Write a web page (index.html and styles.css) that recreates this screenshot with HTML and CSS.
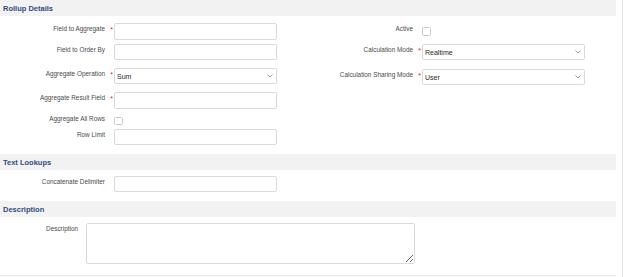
FILE: index.html
```html
<!DOCTYPE html>
<html>
<head>
<meta charset="utf-8">
<link rel="stylesheet" href="styles.css">
</head>
<body>
<div class="page">
  <div class="form">
    <section class="section">
      <h2 class="section-title">Rollup Details</h2>
      <div class="section-body cols">
        <div class="col">
          <div class="row r1">
            <div class="label">Field to Aggregate</div><div class="req">*</div>
            <div class="input h17"></div>
          </div>
          <div class="row r2">
            <div class="label">Field to Order By</div><div class="req"></div>
            <div class="input"></div>
          </div>
          <div class="row r3">
            <div class="label">Aggregate Operation</div><div class="req">*</div>
            <div class="input select"><span class="val">Sum</span><svg class="chev" width="6" height="4" viewBox="0 0 6 4"><path d="M0.5 0.5 L3 3 L5.5 0.5" fill="none" stroke="#8a8a8a" stroke-width="0.9"/></svg></div>
          </div>
          <div class="row r4">
            <div class="label">Aggregate Result Field</div><div class="req">*</div>
            <div class="input h17"></div>
          </div>
          <div class="row r5">
            <div class="label nopad">Aggregate All Rows</div><div class="req"></div>
            <div class="ctl"><div class="check lcheck"></div></div>
          </div>
          <div class="row r6">
            <div class="label">Row Limit</div><div class="req"></div>
            <div class="input"></div>
          </div>
        </div>
        <div class="col">
          <div class="row r1">
            <div class="label">Active</div><div class="req"></div>
            <div class="ctl h17"><div class="check rcheck"></div></div>
          </div>
          <div class="row r2">
            <div class="label">Calculation Mode</div><div class="req">*</div>
            <div class="input select"><span class="val">Realtime</span><svg class="chev" width="6" height="4" viewBox="0 0 6 4"><path d="M0.5 0.5 L3 3 L5.5 0.5" fill="none" stroke="#8a8a8a" stroke-width="0.9"/></svg></div>
          </div>
          <div class="row r3b">
            <div class="label">Calculation Sharing Mode</div><div class="req">*</div>
            <div class="input select"><span class="val">User</span><svg class="chev" width="6" height="4" viewBox="0 0 6 4"><path d="M0.5 0.5 L3 3 L5.5 0.5" fill="none" stroke="#8a8a8a" stroke-width="0.9"/></svg></div>
          </div>
        </div>
      </div>
    </section>
    <section class="section">
      <h2 class="section-title">Text Lookups</h2>
      <div class="section-body lookups">
        <div class="row">
          <div class="label">Concatenate Delimiter</div><div class="req"></div>
          <div class="input"></div>
        </div>
      </div>
    </section>
    <section class="section last">
      <h2 class="section-title">Description</h2>
      <div class="section-body desc">
        <div class="desc-label">Description</div>
        <textarea class="textarea"></textarea>
      </div>
    </section>
  </div>
  <div class="rail"></div>
</div>
</body>
</html>
```

FILE: styles.css
```css
* { box-sizing: border-box; }
html, body { margin: 0; padding: 0; background: #fff; }
body {
  font-family: "Liberation Sans", Arial, sans-serif;
  color: #444;
  width: 624px;
  height: 277px;
  overflow: hidden;
}
.page { display: flex; height: 277px; }
.form { width: 616px; }
.rail { width: 1px; margin-left: 6px; background: #e4e4e4; height: 277px; }

.section-title {
  margin: 0;
  height: 16px;
  background: #f2f2f2;
  padding-left: 3px;
  font-size: 7.5px;
  line-height: 18px;
  font-weight: bold;
  color: #2f4d7e;
}

.section-body.cols {
  display: grid;
  grid-template-columns: 308px 308px;
  padding: 7px 0 9px;
}
.col { display: flex; flex-direction: column; }

.row {
  display: grid;
  grid-template-columns: 105px 9px 163px;
  align-items: start;
}
.r1 { margin-bottom: 4px; }
.r2 { margin-bottom: 8px; }
.r3 { margin-bottom: 8px; }
.r3b { margin-top: 1px; }
.r4 { margin-bottom: 6px; }
.r5 { margin-bottom: 4px; height: 10px; }

.label {
  text-align: right;
  font-size: 6.4px;
  line-height: 8px;
  padding-top: 2px;
  color: #4a4a4a;
  white-space: nowrap;
}
.label.nopad { padding-top: 0; }
.req {
  color: #d62020;
  font-size: 7px;
  line-height: 8px;
  padding-top: 3px;
  text-align: right;
  padding-right: 1px;
}
.input {
  height: 16px;
  border: 1px solid #dadada;
  border-radius: 2px;
  background: #fff;
}
.input.h17, .ctl.h17 { height: 17px; }
.select {
  display: flex;
  align-items: center;
  justify-content: space-between;
  padding: 0 3px 0 2px;
}
.val {
  font-size: 7px;
  color: #1f1f1f;
  padding-top: 1px;
}
.chev { display: block; }
.check {
  width: 9px;
  height: 9px;
  border: 1px solid #c9c9c9;
  border-radius: 1.5px;
  background: #fff;
}
.lcheck { margin-top: 2px; height: 8px; }
.rcheck { margin-top: 4px; }

.section-body.lookups { padding: 6px 0 9px; }

.section.last { border-bottom: 1px solid #e6e6e6; }
.section-body.desc {
  display: flex;
  align-items: flex-start;
  padding: 6px 0 11px;
}
.desc-label {
  width: 78px;
  text-align: right;
  font-size: 6.4px;
  line-height: 8px;
  padding-top: 2px;
  color: #4a4a4a;
}
.textarea {
  display: block;
  margin: 0 0 0 8px;
  width: 329px;
  height: 41px;
  border: 1px solid #dadada;
  border-radius: 2px;
  padding: 0;
  resize: both;
  background: #fff;
}
```
